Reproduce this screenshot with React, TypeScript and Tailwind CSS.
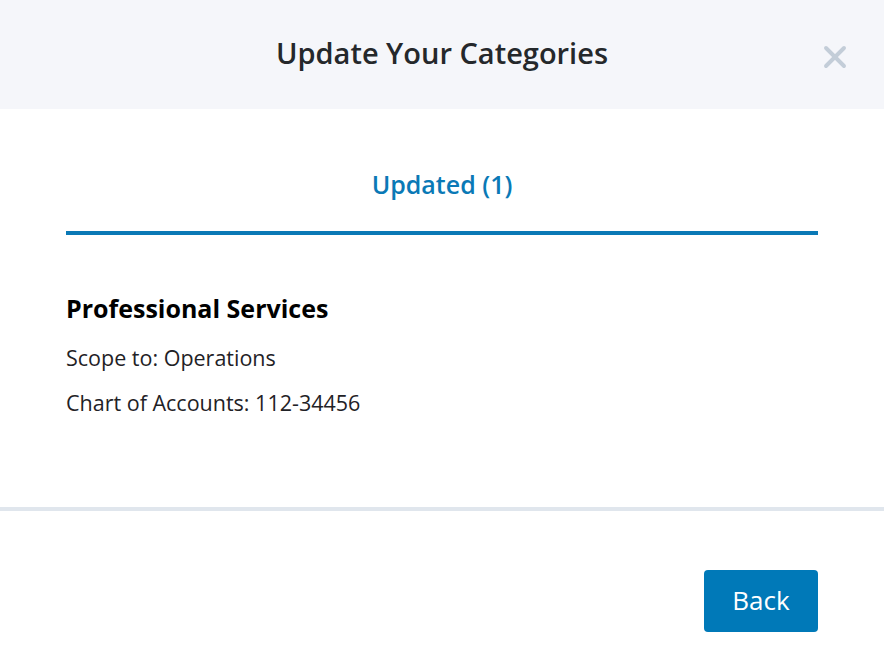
import { X } from "lucide-react";

export default function App() {
  return (
    <div className="w-[884px] h-[670px] bg-white font-['Open_Sans',sans-serif] text-[#1f2226] overflow-hidden">
      <Header />
      <Tabs />
      <Details />
      <div className="h-[4px] bg-[#e0e6ed]" />
      <Footer />
    </div>
  );
}

function Header() {
  return (
    <div className="relative h-[109px] bg-[#f5f6fa] flex items-center justify-center">
      <h1 className="text-[29px] font-semibold text-[#25282b] leading-none pb-[4px]">Update Your Categories</h1>
      <button className="absolute right-[31px] top-[39px] text-[#c3cdd8]">
        <X size={36} strokeWidth={2.6} />
      </button>
    </div>
  );
}

function Tabs() {
  return (
    <div className="px-[66px] pt-[59px]">
      <div className="flex flex-col items-center">
        <span className="text-[25px] font-semibold text-[#0a79b6] leading-[32px]">Updated (1)</span>
        <div className="mt-[31px] h-[4px] w-full bg-[#0a79b6]" />
      </div>
    </div>
  );
}

function Details() {
  return (
    <div className="px-[66px] pt-[57px] h-[272px]">
      <h2 className="text-[25px] font-bold text-black leading-[32px]">Professional Services</h2>
      <p className="mt-[19px] text-[21.5px] leading-[30px]">Scope to: Operations</p>
      <p className="mt-[15px] text-[21.5px] leading-[30px]">Chart of Accounts: 112-34456</p>
    </div>
  );
}

function Footer() {
  return (
    <div className="px-[66px] pt-[59px] flex justify-end">
      <button className="w-[114px] h-[62px] rounded-[4px] bg-[#0079b8] text-white text-[26px] leading-none pb-[2px]">Back</button>
    </div>
  );
}
